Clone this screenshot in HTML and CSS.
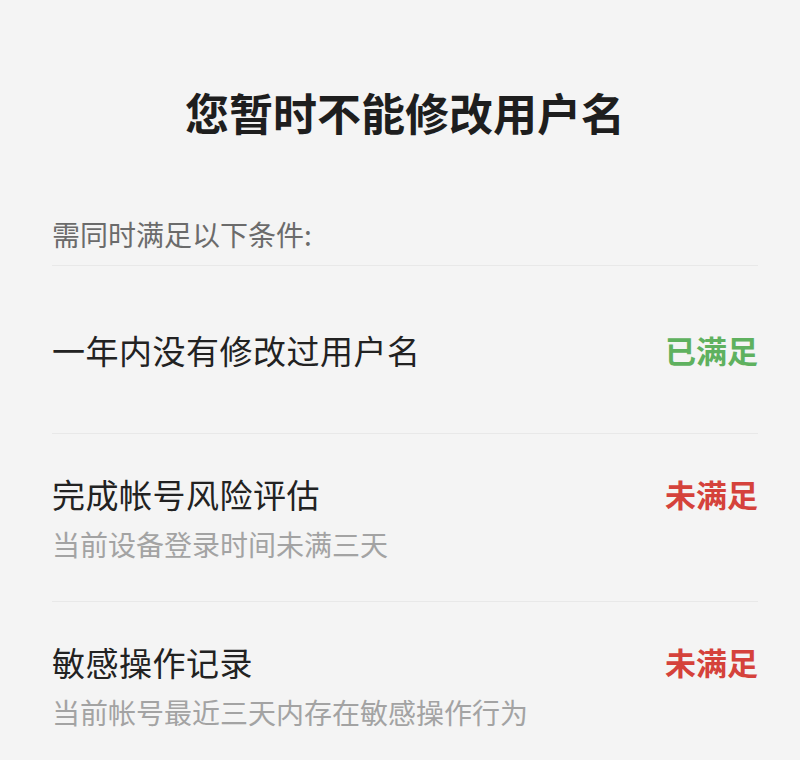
FILE: index.html
```html
<!DOCTYPE html>
<html lang="zh-CN">
<head>
    <meta charset="UTF-8">
    <meta name="viewport" content="width=device-width, initial-scale=1.0">
    <title>修改用户名</title>
    <link rel="stylesheet" href="styles.css">
</head>
<body>
    <div class="page">
        <h1 class="page-title">您暂时不能修改用户名</h1>
        <div class="hint">需同时满足以下条件:</div>

        <div class="cond">
            <div class="cond-name">一年内没有修改过用户名</div>
            <div class="cond-state ok">已满足</div>
        </div>

        <div class="cond">
            <div class="cond-name">完成帐号风险评估</div>
            <div class="cond-state fail">未满足</div>
            <div class="cond-desc">当前设备登录时间未满三天</div>
        </div>

        <div class="cond">
            <div class="cond-name">敏感操作记录</div>
            <div class="cond-state fail">未满足</div>
            <div class="cond-desc">当前帐号最近三天内存在敏感操作行为</div>
        </div>
    </div>
</body>
</html>
```

FILE: styles.css
```css
body {
    margin: 0;
    background-color: #f4f4f4;
    font-family: "Noto Sans CJK SC", "Noto Sans", sans-serif;
    color: #222;
}

.page {
    padding: 82px 42px 0 52px;
}

.page-title {
    margin: 0;
    text-align: center;
    font-size: 44px;
    line-height: 60px;
    font-weight: 700;
    color: #1e1e1e;
}

.hint {
    margin-top: 74px;
    padding-bottom: 13px;
    font-size: 28px;
    line-height: 36px;
    color: #6b6b6b;
    border-bottom: 1px solid #e8e8e8;
}

.cond {
    display: grid;
    grid-template-columns: 1fr auto;
    align-content: center;
    row-gap: 12px;
    min-height: 167px;
    border-bottom: 1px solid #e8e8e8;
}

.cond-name {
    font-size: 33px;
    line-height: 40px;
    letter-spacing: 0.5px;
}

.cond-state {
    font-size: 31px;
    line-height: 40px;
    font-weight: 700;
}

.cond-state.ok { color: #5fb15f; }
.cond-state.fail { color: #d5423b; }

.cond-desc {
    grid-column: 1 / -1;
    font-size: 28px;
    line-height: 36px;
    color: #a3a3a3;
}
```
